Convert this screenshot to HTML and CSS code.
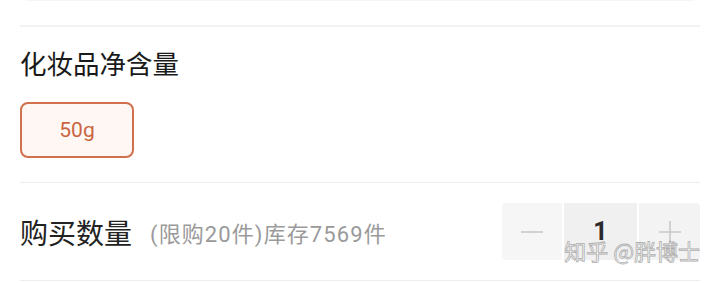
FILE: index.html
```html
<!DOCTYPE html>
<html lang="zh-CN">
<head>
<meta charset="utf-8">
<meta name="viewport" content="width=device-width, initial-scale=1">
<title>商品规格</title>
<link rel="stylesheet" href="styles.css">
</head>
<body>

<div class="top-gap"></div>

<div class="spec">
  <div class="spec-title">化妆品净含量</div>
  <div class="chips">
    <span class="chip active">50g</span>
  </div>
</div>

<div class="qty-row">
  <span class="qty-label">购买数量</span>
  <span class="qty-note">(限购20件)库存7569件</span>
  <div class="stepper">
    <button class="step minus">
      <svg width="24" height="24" viewBox="0 0 24 24"><path d="M1 12h22" stroke="#c9c9c9" stroke-width="1.6"/></svg>
    </button>
    <span class="step value">1</span>
    <button class="step plus">
      <svg width="24" height="24" viewBox="0 0 24 24"><path d="M1 12h22M12 1v22" stroke="#c9c9c9" stroke-width="1.6"/></svg>
    </button>
  </div>
  <div class="watermark">知乎 @胖博士</div>
</div>

</body>
</html>
```

FILE: styles.css
```css
body {
  margin: 0;
  padding: 0 20px;
  background: #fff;
  font-family: "Noto Sans CJK SC", "Noto Sans", sans-serif;
  color: #1a1a1a;
}
.top-gap {
  height: 24px;
  border-top: 1px solid #f6f6f6;
  margin: 0 6px;
}
.spec {
  border-top: 2px solid #f2f2f2;
  padding: 18px 0 24px;
}
.spec-title {
  font-size: 26.5px;
  line-height: 36px;
}
.chips { margin-top: 21px; display: flex; }
.chip {
  display: flex;
  align-items: center;
  justify-content: center;
  width: 110px;
  height: 52px;
  border: 2px solid #d0704c;
  border-radius: 8px;
  background: #fff7f4;
  color: #c9653f;
  font-family: Roboto, "Noto Sans", sans-serif;
  font-size: 21px;
}
.qty-row {
  position: relative;
  display: flex;
  align-items: center;
  height: 97px;
  border-top: 1px solid #eeeeee;
  border-bottom: 1px solid #eeeeee;
}
.qty-label {
  font-size: 28px;
  color: #222;
}
.qty-note {
  margin-left: 18px;
  font-family: Roboto, "Noto Sans CJK SC", sans-serif;
  font-size: 22px;
  letter-spacing: 1.1px;
  color: #9a9a9a;
}
.stepper {
  margin-left: auto;
  display: flex;
  gap: 2px;
  height: 57px;
}
.step {
  display: flex;
  align-items: center;
  justify-content: center;
  border: none;
  padding: 0;
  width: 60px;
  background: #f5f5f5;
}
.minus { border-radius: 4px 0 0 4px; background: #f6f6f6; }
.plus { width: 61px; border-radius: 0 4px 4px 0; background: #f3f3f3; }
.value {
  width: 73px;
  background: #f0f0f0;
  font-family: Roboto, "Noto Sans", sans-serif;
  font-weight: bold;
  font-size: 25px;
  color: #2a2a2a;
}
.watermark {
  position: absolute;
  right: 0;
  bottom: 18px;
  font-size: 22px;
  line-height: 24px;
  color: #fff;
  -webkit-text-stroke: 0.8px #a8a8a8;
  opacity: 0.9;
}
```
